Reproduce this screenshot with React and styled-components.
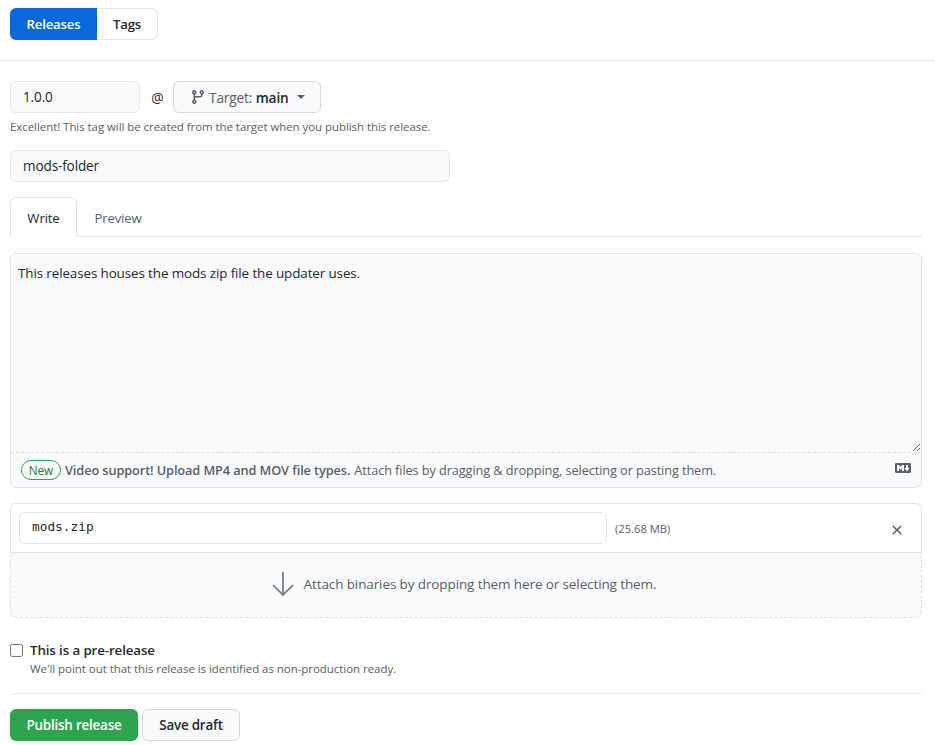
import React from "react";
import styled, { createGlobalStyle } from "styled-components";

const Global = createGlobalStyle`
  html, body { margin: 0; padding: 0; background: #fff; }
  body { font-family: "Open Sans", "Noto Sans", sans-serif; font-size: 14px; color: #24292f; }
  * { box-sizing: border-box; }
`;
const FONT = `"Open Sans", "Noto Sans", sans-serif`;
const SOFT = "#f9fafc";

const Page = styled.div`
  width: 935px;
  height: 745px;
  overflow: hidden;
  padding-top: 8px;
`;
const Segmented = styled.div`
  display: flex;
  margin-left: 10px;
  height: 32px;
`;
const SegButton = styled.div`
  display: flex;
  align-items: center;
  justify-content: center;
  width: ${p => p.$w}px;
  font-size: 13.2px;
  font-weight: 600;
  letter-spacing: -0.2px;
  ${p => p.$active
    ? "background:#0969da;color:#fff;border-radius:6px 0 0 6px;"
    : "background:#fff;color:#24292f;border:1px solid #e1e4e8;border-left:0;border-radius:0 6px 6px 0;"}
`;
const TopRule = styled.div`
  height: 1px;
  background: #e8eaed;
  margin-top: 20px;
`;
const Form = styled.div`
  padding: 20px 13px 0 10px;
`;
const TagRow = styled.div`
  display: flex;
  align-items: center;
  height: 32px;
`;
const TextInput = styled.input`
  display: block;
  width: ${p => p.$w}px;
  height: 32px;
  padding: 0 12px 2px;
  border: 1px solid #e3e6ea;
  border-radius: 6px;
  background: ${SOFT};
  font: 13.6px ${FONT};
  letter-spacing: -0.15px;
  color: #24292f;
  outline: none;
`;
const At = styled.span`
  width: 33px;
  padding-left: 2px;
  text-align: center;
  font-size: 13.8px;
`;
const TargetButton = styled.div`
  display: flex;
  align-items: center;
  width: 148px;
  height: 32px;
  padding-left: 16px;
  border: 1px solid #d5d8dc;
  border-radius: 6px;
  background: ${SOFT};
  font-size: 13.7px;
  letter-spacing: -0.15px;
  color: #57606a;
  svg { flex: none; }
`;
const TargetLabel = styled.span`
  margin-left: 3px;
  white-space: pre;
  b { font-weight: 600; color: #24292f; }
`;
const Caret = styled.span`
  margin-left: 8px;
  width: 0;
  height: 0;
  border-left: 4px solid transparent;
  border-right: 4px solid transparent;
  border-top: 4px solid #57606a;
`;
const Note = styled.div`
  margin-top: 6px;
  height: 16px;
  line-height: 16px;
  font-size: 11.47px;
  letter-spacing: -0.05px;
  color: #57606a;
  white-space: nowrap;
`;
const TitleWrap = styled.div`
  margin-top: 15px;
`;
const Tabs = styled.div`
  display: flex;
  height: 40px;
  margin-top: 15px;
  border-bottom: 1px solid #e1e4e8;
`;
const Tab = styled.div`
  display: flex;
  align-items: center;
  justify-content: center;
  width: ${p => p.$w}px;
  height: 40px;
  font-size: 13.2px;
  letter-spacing: -0.15px;
  ${p => p.$active
    ? "background:#fff;color:#24292f;border:1px solid #e1e4e8;border-bottom:0;border-radius:6px 6px 0 0;"
    : "color:#57606a;padding-top:1px;"}
`;
const Editor = styled.div`
  margin-top: 16px;
  height: 235px;
  border: 1px solid #e1e4e8;
  border-radius: 6px;
  background: ${SOFT};
  overflow: hidden;
`;
const Area = styled.textarea`
  display: block;
  width: 100%;
  height: 199px;
  padding: 9px 7px;
  border: 0;
  border-bottom: 1px dashed #dcdfe3;
  background: transparent;
  resize: vertical;
  outline: none;
  font: 13.45px/20px ${FONT};
  letter-spacing: -0.12px;
  color: #24292f;
`;
const EditorFoot = styled.div`
  display: flex;
  align-items: center;
  height: 34px;
  padding: 0 10px;
  font-size: 12.75px;
  letter-spacing: -0.1px;
  color: #57606a;
  white-space: nowrap;
  svg { margin-left: auto; margin-top: -5px; }
`;
const NewBadge = styled.span`
  display: flex;
  align-items: center;
  justify-content: center;
  width: 40px;
  height: 20px;
  margin-right: 4px;
  border: 1px solid #2da44e;
  border-radius: 10px;
  color: #1a7f37;
  font-size: 11.8px;
  font-weight: 500;
`;
const Strong = styled.b`
  font-weight: 600;
  margin-right: 4px;
`;
const Upload = styled.div`
  margin-top: 15px;
  height: 115px;
`;
const FileRow = styled.div`
  display: flex;
  align-items: center;
  height: 50px;
  padding-left: 8px;
  border: 1px solid #e1e4e8;
  border-radius: 6px 6px 0 0;
  background: #fff;
`;
const FileName = styled.input`
  display: block;
  width: 588px;
  height: 32px;
  padding: 0 12px 3px;
  border: 1px solid #e1e4e8;
  border-radius: 6px;
  background: #fff;
  outline: none;
  font: 12.8px "DejaVu Sans Mono", monospace;
  color: #24292f;
`;
const FileSize = styled.span`
  margin-left: 8px;
  font-size: 11.2px;
  color: #57606a;
`;
const Remove = styled.span`
  display: flex;
  margin-left: auto;
  margin-right: 16px;
  margin-top: 3px;
`;
const Drop = styled.div`
  display: flex;
  align-items: center;
  justify-content: center;
  height: 65px;
  padding: 0 4px 2px 0;
  background: ${SOFT};
  border: 1px dashed #dcdfe3;
  border-top: 0;
  border-radius: 0 0 6px 6px;
  font-size: 13.52px;
  letter-spacing: -0.12px;
  color: #57606a;
  svg { margin-right: 10px; }
`;
const Check = styled.div`
  display: flex;
  align-items: center;
  margin-top: 23px;
  height: 18px;
`;
const Box = styled.span`
  width: 13px;
  height: 13px;
  border: 1px solid #767676;
  border-radius: 2.5px;
  background: #fff;
`;
const CheckLabel = styled.span`
  margin-left: 7px;
  font-size: 13.3px;
  font-weight: 600;
  letter-spacing: -0.1px;
`;
const CheckNote = styled.div`
  margin: 2px 0 0 20px;
  height: 16px;
  line-height: 16px;
  font-size: 11.5px;
  letter-spacing: -0.05px;
  color: #57606a;
`;
const BottomRule = styled.div`
  margin-top: 16px;
  height: 1px;
  background: #e8eaed;
`;
const Actions = styled.div`
  display: flex;
  gap: 4px;
  margin-top: 15px;
`;
const Button = styled.div`
  display: flex;
  align-items: center;
  justify-content: center;
  width: ${p => p.$w}px;
  height: 32px;
  border-radius: 6px;
  font-size: 13.4px;
  font-weight: 600;
  letter-spacing: -0.2px;
  ${p => p.$primary
    ? "background:#2da44e;color:#fff;"
    : `background:${SOFT};color:#24292f;border:1px solid #d5d8dc;`}
`;

const BranchIcon = () => (
  <svg width="16" height="16" viewBox="0 0 16 16" fill="#57606a">
    <path d="M9.5 3.25a2.25 2.25 0 1 1 3 2.122V6A2.5 2.5 0 0 1 10 8.5H6a1 1 0 0 0-1 1v1.128a2.251 2.251 0 1 1-1.5 0V5.372a2.25 2.25 0 1 1 1.5 0v1.836A2.493 2.493 0 0 1 6 7h4a1 1 0 0 0 1-1v-.628A2.25 2.25 0 0 1 9.5 3.25Zm-6 0a.75.75 0 1 0 1.5 0 .75.75 0 0 0-1.5 0Zm8.25-.75a.75.75 0 1 0 0 1.5.75.75 0 0 0 0-1.5ZM4.25 12a.75.75 0 1 0 0 1.5.75.75 0 0 0 0-1.5Z" />
  </svg>
);
const MarkdownIcon = () => (
  <svg width="16" height="16" viewBox="0 0 16 16" fill="#57606a">
    <path d="M14.85 3c.63 0 1.15.52 1.14 1.15v7.7c0 .63-.51 1.15-1.15 1.15H1.15C.52 13 0 12.48 0 11.84V4.15C0 3.52.52 3 1.15 3ZM9 11V5H7L5.5 7 4 5H2v6h2V8l1.5 1.92L7 8v3Zm2.99.5L14.5 8H13V5h-2v3H9.5Z" />
  </svg>
);
const XIcon = () => (
  <svg width="16" height="16" viewBox="0 0 16 16" fill="#57606a">
    <path d="M3.72 3.72a.75.75 0 0 1 1.06 0L8 6.94l3.22-3.22a.749.749 0 0 1 1.06 1.06L9.06 8l3.22 3.22a.749.749 0 1 1-1.06 1.06L8 9.06l-3.22 3.22a.749.749 0 1 1-1.06-1.06L6.94 8 3.72 4.78a.75.75 0 0 1 0-1.06Z" />
  </svg>
);
const ArrowDown = () => (
  <svg width="22" height="26" viewBox="0 0 22 26" fill="none" stroke="#6e7781" strokeWidth="1.7" strokeLinecap="round" strokeLinejoin="round">
    <path d="M11 1.5v22.5M1.5 14.5 11 24l9.5-9.5" />
  </svg>
);

export default function App() {
  return (
    <Page>
      <Global />
      <Segmented>
        <SegButton $active $w={87}>Releases</SegButton>
        <SegButton $w={61}>Tags</SegButton>
      </Segmented>
      <TopRule />
      <Form>
        <TagRow>
          <TextInput $w={130} readOnly value="1.0.0" />
          <At>@</At>
          <TargetButton>
            <BranchIcon />
            <TargetLabel>Target: <b>main</b></TargetLabel>
            <Caret />
          </TargetButton>
        </TagRow>
        <Note>Excellent! This tag will be created from the target when you publish this release.</Note>
        <TitleWrap>
          <TextInput $w={440} readOnly value="mods-folder" />
        </TitleWrap>
        <Tabs>
          <Tab $active $w={67}>Write</Tab>
          <Tab $w={82}>Preview</Tab>
        </Tabs>
        <Editor>
          <Area readOnly value="This releases houses the mods zip file the updater uses." />
          <EditorFoot>
            <NewBadge>New</NewBadge>
            <Strong>Video support! Upload MP4 and MOV file types.</Strong>
            Attach files by dragging &amp; dropping, selecting or pasting them.
            <MarkdownIcon />
          </EditorFoot>
        </Editor>
        <Upload>
          <FileRow>
            <FileName readOnly value="mods.zip" />
            <FileSize>(25.68 MB)</FileSize>
            <Remove><XIcon /></Remove>
          </FileRow>
          <Drop>
            <ArrowDown />
            Attach binaries by dropping them here or selecting them.
          </Drop>
        </Upload>
        <Check>
          <Box />
          <CheckLabel>This is a pre-release</CheckLabel>
        </Check>
        <CheckNote>We'll point out that this release is identified as non-production ready.</CheckNote>
        <BottomRule />
        <Actions>
          <Button $primary $w={128}>Publish release</Button>
          <Button $w={98}>Save draft</Button>
        </Actions>
      </Form>
    </Page>
  );
}
